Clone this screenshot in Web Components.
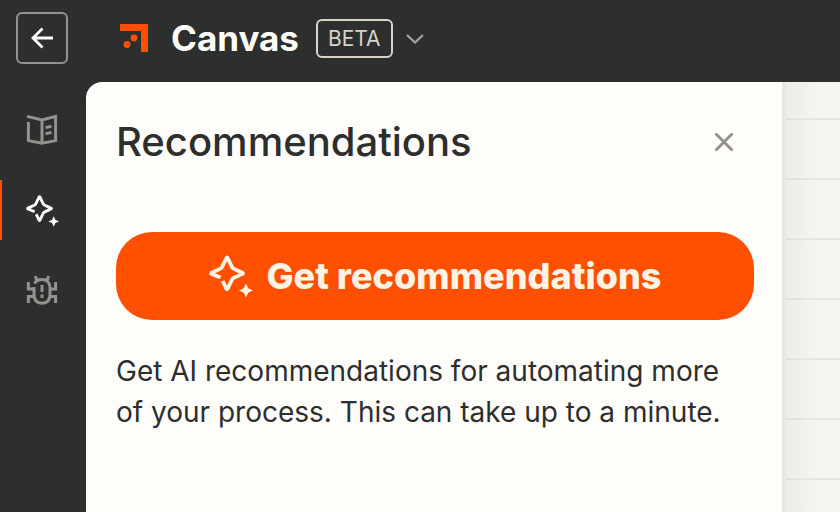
<!DOCTYPE html>
<html lang="en">
<head>
<meta charset="utf-8">
<title>Canvas</title>
<style>
html, body { margin: 0; height: 100%; }
body { background: #2d2e2e; color: #2d2e2e; font-family: Inter, "Liberation Sans", sans-serif; }
</style>
</head>
<body>
<canvas-app></canvas-app>
<script>
const define = (name, html) => customElements.define(name, class extends HTMLElement {
  constructor() {
    super();
    const t = document.createElement('template');
    t.innerHTML = html;
    this.attachShadow({ mode: 'open' }).append(t.content.cloneNode(true));
  }
});

define('sparkle-icon', `
<style>:host { display: block; width: 44px; height: 44px; } svg { display: block; width: 100%; height: 100%; }</style>
<svg viewBox="0 0 44 44" fill="none" aria-hidden="true">
  <path d="M11.5 23.600 2.600 19.900Q1.400 19.400 2.600 18.800L11 14.900Q12.500 14.200 13.200 12.700L17.400 4Q18 2.800 18.600 4L22.800 12.700Q23.500 14.200 25 14.900L33.400 18.800Q34.600 19.400 33.400 19.900L25 23.800Q23.500 24.500 22.800 26L18.600 34.700Q18 35.900 17.400 34.700L13.600 27" stroke="currentColor" stroke-width="3.8"/>
  <path d="M37 29.500 39.200 34.300 44 36.500 39.200 38.700 37 43.500 34.800 38.700 30 36.500 34.800 34.300Z" fill="currentColor"/>
</svg>`);

define('top-bar', `
<style>
:host { display: flex; align-items: center; height: 82px; padding: 0 16px; box-sizing: border-box; background: #2d2e2e; color: #fffdf9; }
button { font: inherit; color: inherit; background: none; padding: 0; margin: 0; border: 0; cursor: pointer; }
svg { display: block; }
.back { width: 52px; height: 52px; flex: none; display: grid; place-items: center; border: 2px solid #95928e; border-radius: 6px; box-sizing: border-box; }
.bar { display: flex; align-items: center; padding-bottom: 6px; width: 100%; }
.logo { margin-left: 52px; flex: none; }
h1 { margin: 0 0 0 23px; font-size: 35px; line-height: 44px; font-weight: 700; }
.beta { margin-left: 17px; padding: 0 10px; border: 2px solid #d7d3c9; border-radius: 6px; color: #d7d3c9; font-size: 21px; line-height: 35px; }
.more { margin-left: 12px; width: 20px; height: 40px; display: grid; place-items: center; color: #a8a5a0; }
</style>
<div class="bar">
  <button class="back" aria-label="Back"><svg width="24" height="24" viewBox="0 0 24 24" fill="none" stroke="currentColor" stroke-width="2.8"><path d="M23 12H3M12.5 2.500 3 12l9.500 9.500"/></svg></button>
  <svg class="logo" width="28" height="28" viewBox="0 0 28 28" fill="#ff4f00" aria-hidden="true"><path d="M0 0h28v28h-7V7H0z"/><circle cx="14" cy="14" r="3.400"/><circle cx="7" cy="20.500" r="3.400"/></svg>
  <h1>Canvas</h1>
  <span class="beta">BETA</span>
  <button class="more" aria-label="Canvas menu"><svg width="20" height="14" viewBox="0 0 20 14" fill="none" stroke="currentColor" stroke-width="2.200"><path d="m2 4 8 7.500L18 4"/></svg></button>
</div>`);

define('side-nav', `
<style>
:host { display: block; background: #2d2e2e; }
nav { display: grid; gap: 20px; padding-top: 18px; }
button { display: grid; place-items: center; height: 60px; width: 100%; box-sizing: border-box; padding: 0 4px 0 2px; margin: 0; border: 0; background: none; color: #95928e; cursor: pointer; }
button[aria-current] { color: #fffdf9; background: linear-gradient(#ff4f00, #ff4f00) left / 2px 100% no-repeat; }
sparkle-icon { width: 33px; height: 33px; }
svg { display: block; }
</style>
<nav aria-label="Tools">
  <button aria-label="Guide"><svg width="32" height="32" viewBox="0 0 32 32" fill="none" stroke="currentColor" stroke-width="3"><path d="M1 2.400 16 6l13.600-3.600v24.200L16 29.200 2.400 26.600V8M16 6v23"/><path d="m19.500 13.600 6-1.300M19.500 19.700l6-1.300"/></svg></button>
  <button aria-label="Recommendations" aria-current="page"><sparkle-icon></sparkle-icon></button>
  <button aria-label="Debug"><svg width="32" height="32" viewBox="0 0 32 32" fill="none" stroke="currentColor" stroke-width="3"><path d="M8.500 9.500C10 6.500 12.500 5.400 16 5.400c5 0 8 3.600 8 8.600v6c0 6-3 9.300-8 9.300s-8-3.300-8-9.300v-7"/><path d="M2.400 8v7H8M2.400 29v-6.500H8M29.600 8v7H24M29.600 29v-6.500h-5.600M9.500 2l.8 3.200 3 1.500M22.500 2l-.8 3.200-3 1.500M16 11v7M16 20.500v3.500"/></svg></button>
</nav>`);

define('cta-button', `
<style>
:host { display: block; }
button { display: flex; align-items: center; justify-content: center; gap: 14px; width: 100%; min-height: 88px; margin: 0; padding: 0 24px; border: 0; border-radius: 36px; background: #ff4f00; color: #fff3e6; font: 800 36px/44px Inter, "Liberation Sans", sans-serif; cursor: pointer; }
sparkle-icon { flex: none; }
</style>
<button type="button"><sparkle-icon></sparkle-icon><span><slot></slot></span></button>`);

define('side-panel', `
<style>
:host { display: block; box-sizing: border-box; background: #fffdf9; border-right: 4px solid #e8e7e4; border-top-left-radius: 16px; padding: 36px 28px 36px 30px; }
header { display: flex; align-items: center; justify-content: space-between; padding-right: 18px; margin-bottom: 66px; }
.close { display: grid; place-items: center; width: 24px; height: 24px; padding: 0; border: 0; background: none; color: #95928e; cursor: pointer; }
::slotted(h2) { margin: 0; font-size: 40px; line-height: 48px; font-weight: 500; }
::slotted(p) { margin: 31px 0 0; font-size: 28px; line-height: 41px; }
</style>
<header><slot name="title"></slot><button class="close" aria-label="Close"><svg width="24" height="24" viewBox="0 0 24 24" fill="none" stroke="currentColor" stroke-width="3"><path d="m3.500 3.500 17 17M20.500 3.500l-17 17"/></svg></button></header>
<slot></slot>`);

define('grid-surface', `
<style>
:host { display: block; background: linear-gradient(90deg, rgba(45,46,46,.045), rgba(45,46,46,0) 32px), repeating-linear-gradient(#f5f4f1 0 36px, #e8e7e4 36px 38px, #f5f4f1 38px 60px); }
</style>`);

define('canvas-app', `
<style>
:host { display: grid; grid-template-rows: auto 1fr; min-height: 100%; }
main { display: grid; grid-template-columns: 86px minmax(0, 700px) 1fr; }
</style>
<top-bar></top-bar>
<main>
  <side-nav></side-nav>
  <side-panel>
    <h2 slot="title">Recommendations</h2>
    <cta-button>Get recommendations</cta-button>
    <p>Get AI recommendations for automating more of your process. This can take up to a minute.</p>
  </side-panel>
  <grid-surface></grid-surface>
</main>`);
</script>
</body>
</html>
